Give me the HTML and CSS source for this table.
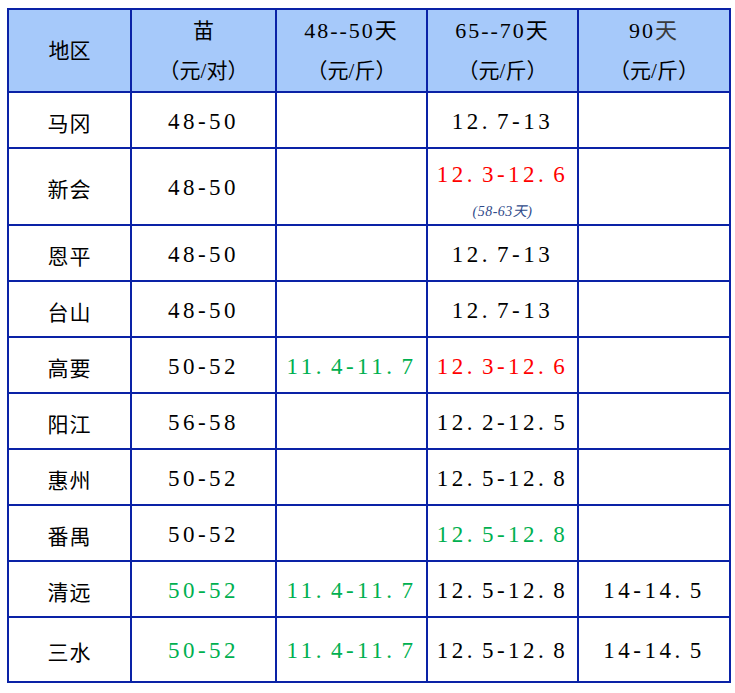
FILE: index.html
```html
<!DOCTYPE html>
<html lang="zh">
<head>
<meta charset="utf-8">
<title>价格表</title>
<link rel="stylesheet" href="styles.css">
</head>
<body>
<table class="price">
  <colgroup>
    <col class="c1"><col class="c2"><col class="c3"><col class="c4"><col class="c5">
  </colgroup>
  <thead>
    <tr class="head">
      <th>地区</th>
      <th><div>苗</div><div>（元/对）</div></th>
      <th><div class="num">48--50天</div><div>（元/斤）</div></th>
      <th><div class="num">65--70天</div><div>（元/斤）</div></th>
      <th><div class="num">90<span class="grey">天</span></div><div>（元/斤）</div></th>
    </tr>
  </thead>
  <tbody>
    <tr><td class="area">马冈</td><td class="num">48-50</td><td></td><td class="num">12<span class="d">.</span>7-13</td><td></td></tr>
    <tr class="tall"><td class="area">新会</td><td class="num">48-50</td><td></td><td class="num stack"><div class="red line">12<span class="d">.</span>3-12<span class="d">.</span>6</div><div class="note">(58-63天)</div></td><td></td></tr>
    <tr><td class="area">恩平</td><td class="num">48-50</td><td></td><td class="num">12<span class="d">.</span>7-13</td><td></td></tr>
    <tr><td class="area">台山</td><td class="num">48-50</td><td></td><td class="num">12<span class="d">.</span>7-13</td><td></td></tr>
    <tr><td class="area">高要</td><td class="num">50-52</td><td class="num green">11<span class="d">.</span>4-11<span class="d">.</span>7</td><td class="num red">12<span class="d">.</span>3-12<span class="d">.</span>6</td><td></td></tr>
    <tr><td class="area">阳江</td><td class="num">56-58</td><td></td><td class="num">12<span class="d">.</span>2-12<span class="d">.</span>5</td><td></td></tr>
    <tr><td class="area">惠州</td><td class="num">50-52</td><td></td><td class="num">12<span class="d">.</span>5-12<span class="d">.</span>8</td><td></td></tr>
    <tr><td class="area">番禺</td><td class="num">50-52</td><td></td><td class="num green">12<span class="d">.</span>5-12<span class="d">.</span>8</td><td></td></tr>
    <tr><td class="area">清远</td><td class="num green">50-52</td><td class="num green">11<span class="d">.</span>4-11<span class="d">.</span>7</td><td class="num">12<span class="d">.</span>5-12<span class="d">.</span>8</td><td class="num">14-14<span class="d">.</span>5</td></tr>
    <tr class="last"><td class="area">三水</td><td class="num green">50-52</td><td class="num green">11<span class="d">.</span>4-11<span class="d">.</span>7</td><td class="num">12<span class="d">.</span>5-12<span class="d">.</span>8</td><td class="num">14-14<span class="d">.</span>5</td></tr>
  </tbody>
</table>
</body>
</html>
```
FILE: styles.css
```css
html, body {
  margin: 0;
  padding: 0;
  background: #ffffff;
}
body {
  padding: 8px 0 0 7px;
  font-family: "Liberation Serif", "Noto Sans CJK SC", serif;
  color: #000;
}
.price {
  border-collapse: collapse;
  table-layout: fixed;
  width: 722px;
  border: 2px solid #0a22a6;
}
.c1 { width: 123px; }
.c2 { width: 145px; }
.c3 { width: 151px; }
.c4 { width: 151px; }
.c5 { width: 152px; }
.price th, .price td {
  border: 2px solid #0a22a6;
  padding: 0;
  text-align: center;
  vertical-align: middle;
}
.head th {
  background: #a6c9fa;
  height: 81px;
  font-weight: normal;
  font-size: 21px;
  line-height: 40px;
}
.head th div {
  height: 40px;
}
.head .num {
  font-size: 22px;
  letter-spacing: 2px;
}
.grey { color: #3a3a3a; }
.price td {
  height: 51px;
  padding-top: 3px;
  font-size: 22px;
  line-height: 26px;
}
.price td.area {
  font-family: "Noto Sans CJK SC", sans-serif;
  font-size: 21px;
  letter-spacing: 1px;
}
.price td.num {
  font-size: 23px;
  letter-spacing: 3.5px;
}
.d {
  padding-right: 6px;
}
.tall td { height: 72px; }
.tall td.stack { height: 67px; padding-top: 8px; }
.tall .line { line-height: 26px; }
.last td { height: 60px; }
.red { color: #ff0000; }
.green { color: #00b050; }
.note {
  font-size: 14px;
  font-style: italic;
  color: #2f4a8a;
  letter-spacing: 0.5px;
  margin-top: 16px;
  line-height: 16px;
}
```
